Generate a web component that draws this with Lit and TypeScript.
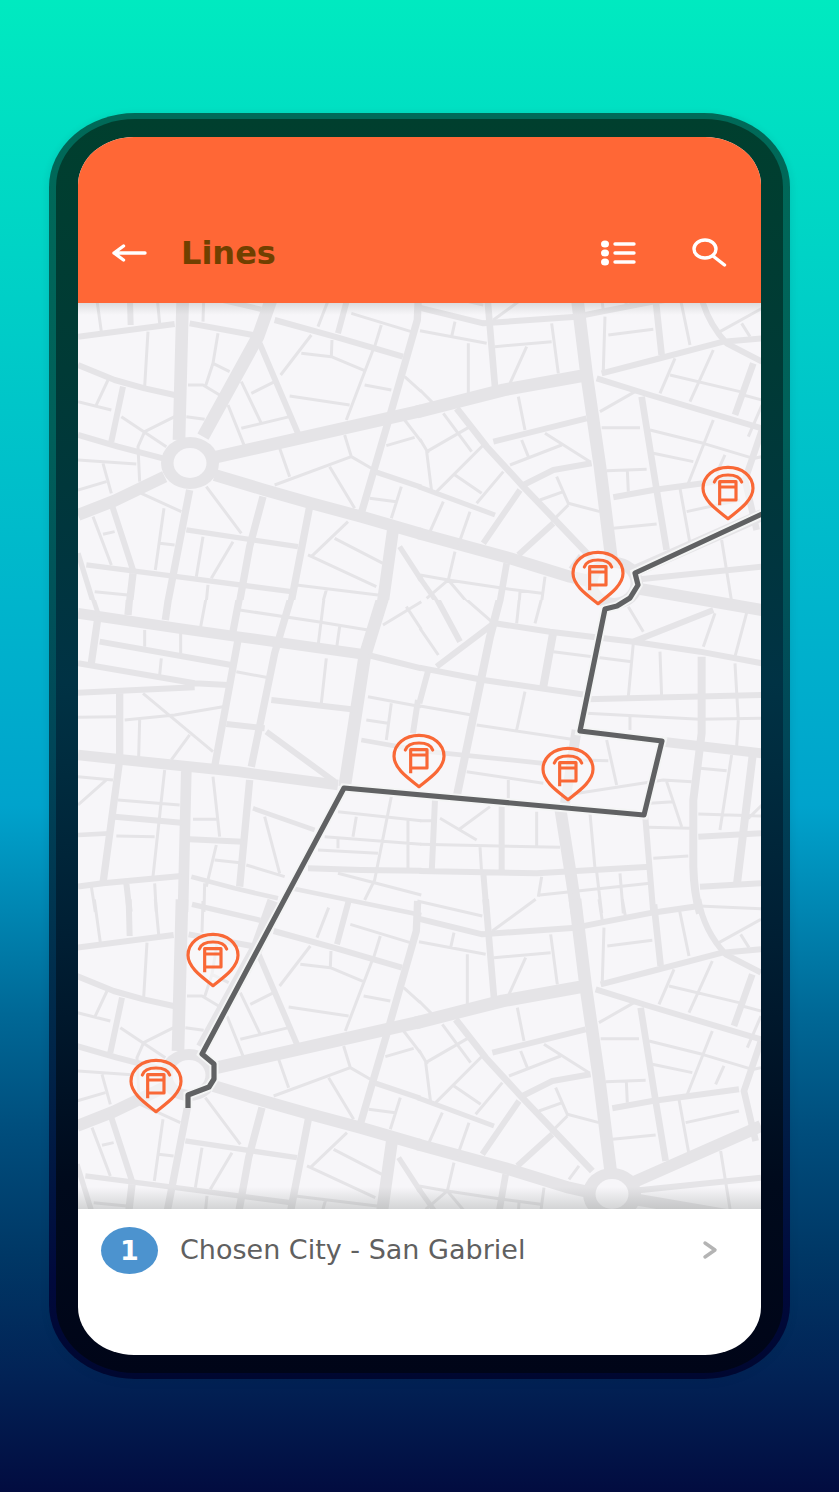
import { LitElement, html, svg, css } from "lit";
import { customElement } from "lit/decorators.js";

interface Street {
  width: number;
  d: string;
}

interface District {
  x: number;
  y: number;
  streets: Street[];
}

// The upper half of the city plan; it repeats further south.
const NORTH: District[] = [
  {
    x: 78,
    y: 300,
    streets: [
      { width: 38, d: "M315 -35L303 420M590 -30L540 110L375 410M410 472L1032 332" },
      { width: 36, d: "M410 525L560 570L700 610L850 650L1030 702M260 530L110 602L0 645M945 690L915 905" },
      { width: 22, d: "M1022 -30L1018 60L935 350L850 640M335 570L270 905M555 590L515 740L485 905M695 620L640 905M165 820L155 905" },
      { width: 18, d: "M0 110L290 72M335 70L525 105M0 195L110 240L200 265L290 285M590 60L770 110L975 170M545 130L660 400M815 -30L780 100M0 405L120 440L255 475M135 260L100 425M155 -35L158 75M100 610L165 810" },
      { width: 16, d: "M325 690L660 740M25 795L280 828L640 875M0 760L45 905M890 515L1030 562M965 740L1030 840M345 -20L550 28" },
      {
        width: 9,
        d: "M52 -35L70 95M235 -35L245 70M378 -30L375 65M210 95L200 260M420 100L405 190L382 260M405 190L455 215M330 255L375 255L425 285M325 350L380 358M450 315L500 440M490 245L550 370M520 280L590 245M490 385L635 350M608 225L700 105M670 160L760 170L860 212M762 120L760 170M885 150L805 360M635 288L815 315M860 255L940 270M755 -10L720 80M820 40L1000 95M910 75L890 140M980 230L1030 275M980 360L1030 425M925 437L1010 412M605 445L635 530M800 405L820 470L880 505M590 555L820 470M755 500L830 625M970 560L940 655M875 595L955 605M90 240L55 315M0 305L100 330M130 350L265 440M290 350L200 395L180 440L185 545M0 480L175 492M75 490L100 580M0 570L85 545M190 580L310 635M258 625L232 810M245 730L290 735M45 650L100 795M75 703L110 695M385 560L490 700M375 710L355 830M465 725L400 835M810 665L700 770M770 715L915 790M690 765L895 860M655 855L900 885M745 870L735 905M50 875L150 885M390 855L385 905",
      },
    ],
  },
  {
    x: 420,
    y: 300,
    streets: [
      { width: 38, d: "M-10 336L250 270L500 225M468 -35L500 225L540 500L575 780" },
      { width: 36, d: "M-5 700L270 775L450 830L540 850M650 865L1026 930M640 815L1026 645" },
      { width: 20, d: "M200 -35L225 260M1000 190L945 345M665 290L710 570L740 750M1026 390L975 540L1010 690M110 325L200 440L310 560L520 780M705 -20L725 165M260 790L240 905" },
      { width: 18, d: "M-5 22L190 70L470 50L560 32L700 5L840 -15M545 220L700 180L910 125L1026 115M838 -35Q855 60 920 130L1026 185M530 235L690 285L1026 385M220 425L500 355M310 555L400 510L515 490M300 570L190 730M400 670L295 765M580 592L700 570L960 535M660 838L1026 800" },
      { width: 15, d: "M-5 560L225 645M-2 832L50 905" },
      {
        width: 9,
        d: "M840 -15L1026 -7M555 50L550 210M395 70L415 220M225 140L395 125M320 140L270 250M565 105L700 88M780 -10L810 135M900 95L1026 25M965 70L990 110M350 -35L220 60M-5 -30L190 15M0 92L200 130M105 65L95 110M145 130L145 280M540 -35L550 30M610 -35L620 20M765 175L720 280M880 150L810 305M750 225L960 275M970 285L1026 300M0 270L40 310M70 340L155 455M150 380L20 455L35 575M0 418L25 460M190 435L50 575M105 525L185 580M250 515L170 610M295 290L315 390M305 420L325 470M375 400L510 485M270 495L425 435M410 530L445 610L540 635M445 615L395 665M360 600L430 575M540 335L645 275M545 383L660 383M560 512L680 508M622 510L625 575M580 685L710 672M690 390L850 430L1000 475M700 460L820 485M880 360L805 550M915 465L890 520M780 565L810 730M800 635L960 600M905 720L935 905M70 605L30 695M150 635L115 735M105 755L85 840M0 825L85 840L250 865L365 880M85 840L20 895M85 840L140 905M375 830L365 905M480 765L450 805M300 875L298 905M1026 315L985 410M1026 470L990 478",
      },
    ],
  },
];

const SOUTH: District[] = [
  {
    x: 78,
    y: 600,
    streets: [
      { width: 32, d: "M0 40L300 85L480 110L870 165M0 465L480 515L780 555M325 510L315 936" },
      { width: 38, d: "M917 -15L860 170L800 560" },
      { width: 22, d: "M155 -10L150 45M272 -10L262 60M485 -10L465 95M640 -10L590 160L520 500M480 120L410 500M60 50L40 190M125 280L125 480L75 850M515 540L485 860" },
      { width: 18, d: "M870 165L1030 205M65 125L460 195M0 190L350 250L450 255M0 278L350 262M445 372L560 385M565 395L770 545M580 300L840 330M335 718L495 725M110 650L310 668M0 860L75 850L310 828M145 850L155 936M1020 300L1005 400M690 805L850 810L1030 812" },
      { width: 14, d: "M850 420L1030 452M525 625L710 690M0 705L95 700M340 830L470 865L600 895M640 865L1030 945M45 -5L60 40" },
      {
        width: 9,
        d: "M384 -5L368 80M738 -5L720 140M485 30L720 65L870 90M785 80L775 150M915 75L1030 5M985 20L1030 88M200 90L200 140M308 100L308 160M250 175L245 225M475 215L580 235M745 175L730 310M195 280L405 455M140 360L290 345L435 320M185 360L182 470M335 405L280 480M0 352L115 350M870 290L1030 320M940 310L925 420M865 360L930 370M0 530L105 540M85 540L0 615M260 510L225 830M120 600L305 615M115 708L230 710M405 530L425 710M345 658L415 658M415 735L385 860M410 780L500 790M505 795L620 830M560 650L605 820M40 860L52 936M230 850L235 936M380 850L378 936M940 590L890 840L860 900M780 635L1030 662M835 650L825 710M740 710L1030 733M780 710L780 745M720 750L900 760M990 660L990 805M780 820L1030 885",
      },
    ],
  },
  {
    x: 420,
    y: 600,
    streets: [
      { width: 36, d: "M650 -35L1026 30M420 620L455 840L470 940" },
      { width: 30, d: "M725 425L1026 460M470 390L435 610" },
      { width: 24, d: "M240 -5L210 110L110 590M400 95L370 260M845 170L845 400L820 600L820 800Q822 880 840 940M1000 450L950 860" },
      { width: 18, d: "M225 70L390 95L640 125L840 155L1026 190M-2 203L190 240L500 285M215 75L50 200M50 -5L120 125M25 210L-2 310M500 298L1026 285M675 640L700 940M45 600L35 820M245 610L245 820M-2 813L350 820L690 800M640 125L880 30M190 820L200 940M835 710L1026 700M840 860L1026 850" },
      { width: 14, d: "M-2 452L370 490M550 30L480 390" },
      {
        width: 9,
        d: "M0 85L55 165M135 -5L215 65M298 -5L290 70M365 -5L345 70M625 20L670 95M885 40L850 140M985 20L945 170M400 155L635 185M640 130L625 290M720 155L725 290M945 190L955 360L950 440M0 318L155 345M315 275L290 390M170 375L470 420M500 340L840 358L1026 355M630 350L630 390M140 515L370 550M265 540L265 595M560 420L590 555M480 480L565 482M440 585L730 540L815 545M740 545L785 680M690 610L760 605M685 682L810 685M700 775L805 768M935 465L900 690M840 505L920 512M835 642L1026 648M1026 615L985 655M0 733L420 742M60 655L170 720M210 620L115 690M180 740L185 820M350 635L350 740M365 830L355 890M510 640L525 805M530 815L545 940M600 820L610 940M360 885L690 850M0 662L45 662",
      },
    ],
  },
];

const STOPS = [
  [728, 466],
  [598, 551],
  [419, 734],
  [568, 747],
  [213, 933],
  [156, 1059],
];

const ROUTE =
  "762,514 635,573 638,585 630,598 617,606 605,609 580,731 662,741 644,815 344,788 202,1054 214,1064 214,1079 209,1087 188,1095 188,1108";

const drawDistrict = (d: District) => svg`
  <g transform="translate(${d.x} ${d.y}) scale(0.3333)">
    ${d.streets.map((s) => svg`<path class="street" stroke-width=${s.width} d=${s.d}></path>`)}
  </g>`;

const roundabout = (x: number, y: number) => svg`
  <ellipse class="ring" cx=${x} cy=${y} rx="29" ry="26"></ellipse>
  <ellipse class="island" cx=${x} cy=${y} rx="16.5" ry="15"></ellipse>`;

@customElement("line-map")
export class LineMap extends LitElement {
  static styles = css`
    :host {
      display: block;
      background: #f7f6f9;
    }
    .map {
      display: block;
      width: 100%;
    }
    .street {
      fill: none;
      stroke: #e5e4e7;
      stroke-linejoin: round;
    }
    .ring {
      fill: #e5e4e7;
    }
    .island {
      fill: #f7f6f9;
    }
    .halo {
      fill: none;
      stroke: #f4f5f5;
      stroke-width: 9;
    }
    .route {
      fill: none;
      stroke: #606163;
      stroke-width: 5.2;
      stroke-linejoin: round;
    }
    .pin {
      fill: none;
      stroke: #f96836;
      stroke-width: 9.5;
      stroke-linejoin: round;
    }
    .pin-body {
      fill: #f8f8f8;
      fill-opacity: 0.6;
    }
    .pin-roof {
      stroke-linecap: round;
    }
  `;

  render() {
    return html`
      <svg class="map" viewBox="78 303 683 906" role="img" aria-label="Route map of line 1">
        <defs>
          <linearGradient id="top-shade" x1="0" y1="0" x2="0" y2="1">
            <stop offset="0" stop-color="#6d7470" stop-opacity="0.2"></stop>
            <stop offset="1" stop-color="#8d9490" stop-opacity="0"></stop>
          </linearGradient>
          <linearGradient id="bottom-shade" x1="0" y1="0" x2="0" y2="1">
            <stop offset="0" stop-color="#6d7470" stop-opacity="0"></stop>
            <stop offset="1" stop-color="#6d7470" stop-opacity="0.26"></stop>
          </linearGradient>
          <clipPath id="north-clip"><rect x="70" y="280" width="700" height="320"></rect></clipPath>
          <clipPath id="south-clip"><rect x="70" y="600" width="700" height="318"></rect></clipPath>
        </defs>
        <g clip-path="url(#south-clip)">${SOUTH.map(drawDistrict)}</g>
        <g clip-path="url(#north-clip)">${NORTH.map(drawDistrict)}</g>
        <g transform="translate(-1 611)">${NORTH.map(drawDistrict)}</g>
        ${roundabout(190, 463)} ${roundabout(614, 583)} ${roundabout(189, 1075)} ${roundabout(612, 1194)}
        <polyline class="halo" points=${ROUTE}></polyline>
        <polyline class="route" points=${ROUTE}></polyline>
        ${STOPS.map(
          ([x, y]) => svg`
            <g class="pin" transform="translate(${x} ${y}) scale(0.3333)">
              <path class="pin-body" d="M0 158C-24 138 -75 106 -75 67C-75 30 -42 4 0 4C42 4 75 30 75 67C75 106 24 138 0 158Z"></path>
              <path class="pin-roof" d="M-41 48Q-34 27 0 27Q34 27 41 48"></path>
              <path d="M-25 118V47H24V102H-25M-25 63H24"></path>
            </g>`
        )}
        <rect x="78" y="303" width="683" height="12" fill="url(#top-shade)"></rect>
        <rect x="78" y="1187" width="683" height="22" fill="url(#bottom-shade)"></rect>
      </svg>
    `;
  }
}

@customElement("app-root")
export class AppRoot extends LitElement {
  static styles = css`
    :host {
      display: block;
      box-sizing: border-box;
      min-height: 100vh;
      padding: 113px 49px;
      background: linear-gradient(
        #00eac0 0%,
        #00dfc3 8%,
        #00cbc8 23%,
        #00b5cc 40%,
        #00a3cc 54%,
        #0086b2 61%,
        #006896 68%,
        #004d7c 76%,
        #003866 84%,
        #022356 92%,
        #020c40 100%
      );
      font-family: "DejaVu Sans", Verdana, sans-serif;
    }
    .phone {
      padding: 6px 7px;
      border-radius: 86px / 74px;
      background: linear-gradient(#006a58 0%, #00605a 25%, #004658 50%, #002448 75%, #00093c 92%, #000730 100%);
      box-shadow: 0 2px 8px rgba(0, 30, 60, 0.12);
    }
    .bezel {
      padding: 18px 22px;
      border-radius: 79px / 68px;
      background: linear-gradient(#003f2e 0%, #003a36 20%, #003244 45%, #001f34 65%, #000a1c 85%, #000518 100%);
    }
    .screen {
      overflow: hidden;
      border-radius: 56px / 48px;
      background: #fff;
    }
    .bar {
      display: flex;
      align-items: center;
      box-sizing: border-box;
      height: 166px;
      padding: 66px 33px 0 32px;
      background: #ff6736;
    }
    .title {
      flex: 1;
      margin: 0 0 0 33px;
      font-size: 32px;
      line-height: 36px;
      font-weight: 700;
      color: #704000;
    }
    .tool {
      display: grid;
      place-items: center;
      width: 38px;
      height: 36px;
      padding: 0;
      border: 0;
      background: none;
    }
    .tools {
      display: flex;
      gap: 53px;
    }
    .icon {
      display: block;
      fill: none;
      stroke: #fff;
      stroke-width: 3.4;
      stroke-linecap: round;
      stroke-linejoin: round;
    }
    .dot {
      fill: #fff;
      stroke: none;
    }
    .row {
      display: flex;
      align-items: center;
      box-sizing: border-box;
      height: 146px;
      padding: 0 43px 64px 23px;
      color: #606060;
      text-decoration: none;
    }
    .badge {
      width: 57px;
      border-radius: 50%;
      background: #4c93cf;
      color: #fff;
      font-size: 27px;
      line-height: 47px;
      font-weight: 700;
      text-align: center;
    }
    .name {
      flex: 1;
      margin-left: 22px;
      font-size: 27px;
      line-height: 32px;
      white-space: nowrap;
    }
    .chevron {
      stroke: #b4b4b4;
    }
  `;

  render() {
    return html`
      <div class="phone">
        <div class="bezel">
          <main class="screen">
            <header class="bar">
              <button class="tool" aria-label="Back">
                <svg class="icon" width="38" height="24" viewBox="0 0 38 24">
                  <path d="M35 12H4M13.5 5L4 12L13.5 19"></path>
                </svg>
              </button>
              <h1 class="title">Lines</h1>
              <div class="tools">
                <button class="tool" aria-label="List of lines">
                  <svg class="icon" width="38" height="30" viewBox="0 0 38 30">
                    <path d="M16 6H35M16 15H35M16 24H35"></path>
                    <ellipse class="dot" cx="6" cy="6" rx="4" ry="3.5"></ellipse>
                    <ellipse class="dot" cx="6" cy="15" rx="4" ry="3.5"></ellipse>
                    <ellipse class="dot" cx="6" cy="24" rx="4" ry="3.5"></ellipse>
                  </svg>
                </button>
                <button class="tool" aria-label="Search">
                  <svg class="icon" width="38" height="32" viewBox="0 0 38 32">
                    <ellipse cx="15" cy="12" rx="11" ry="9"></ellipse>
                    <path d="M23 19L34.5 28"></path>
                  </svg>
                </button>
              </div>
            </header>
            <line-map></line-map>
            <a class="row" href="#line-1">
              <span class="badge">1</span>
              <span class="name">Chosen City - San Gabriel</span>
              <svg class="icon chevron" width="16" height="20" viewBox="0 0 16 20" aria-hidden="true">
                <path d="M3 3L13 10L3 17"></path>
              </svg>
            </a>
          </main>
        </div>
      </div>
    `;
  }
}
